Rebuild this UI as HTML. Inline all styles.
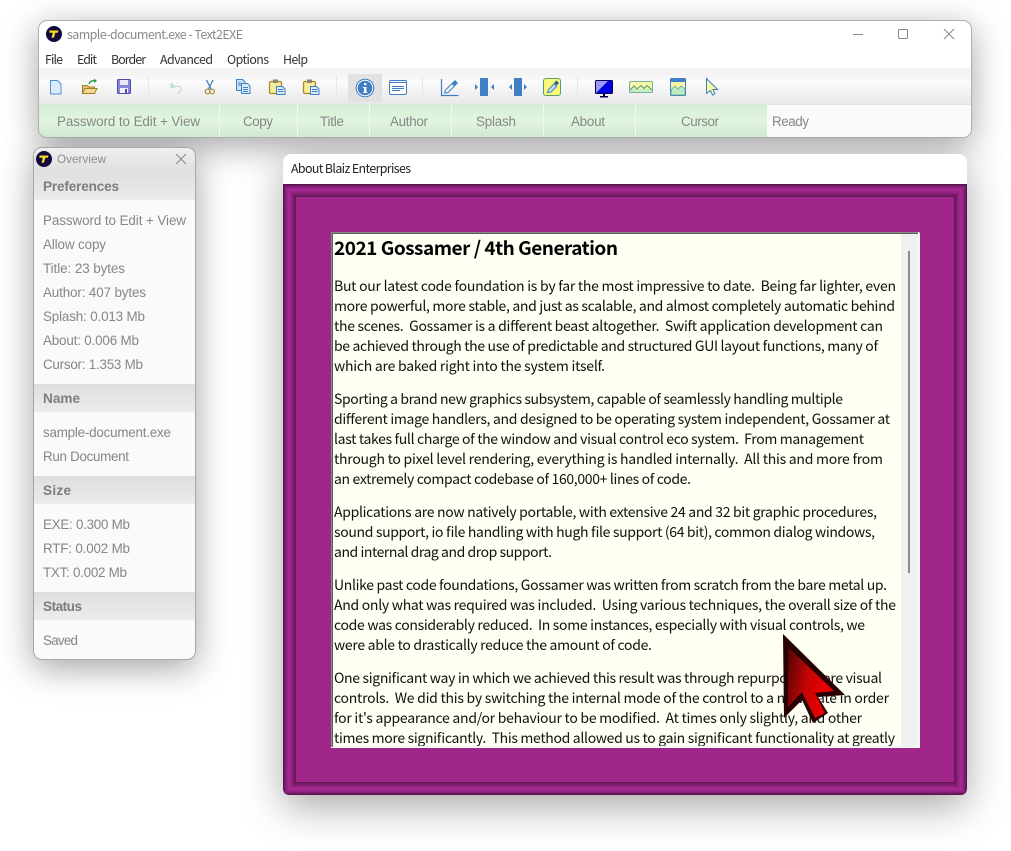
<!DOCTYPE html>
<html><head><meta charset="utf-8"><title>sample-document.exe - Text2EXE</title>
<style>
html,body{margin:0;padding:0;background:#fff;width:1011px;height:851px;overflow:hidden}
.w{position:absolute;box-sizing:border-box}
#main{left:38px;top:20px;width:934px;height:118px;border-radius:9px;background:#fff;border:1px solid #b0b0b0;box-shadow:0 8px 34px rgba(0,0,0,.36)}
#side{left:33px;top:147px;width:163px;height:513px;border-radius:9px;background:#fafafa;border:1px solid #a8a8a8;box-shadow:0 8px 34px rgba(0,0,0,.36)}
#about{left:283px;top:154px;width:684px;height:641px;border-radius:8px;background:#fff;box-shadow:0 12px 40px rgba(0,0,0,.34)}
svg{position:absolute;left:0;top:0}
text{white-space:pre}
.s{font-family:"Liberation Sans",Arial,sans-serif;font-size:13.4px;fill:#868686}
.h{font-family:"Liberation Sans",Arial,sans-serif;font-size:13.6px;font-weight:bold;fill:#7d7d7d}
.u{font-family:"Noto Sans CJK SC","Liberation Sans",sans-serif;font-size:12.4px;fill:#333}
.d{font-family:"Noto Sans CJK SC","Liberation Sans",sans-serif;font-size:14px;fill:#111}
</style></head>
<body>
<div class="w" id="main"></div>
<div class="w" id="side"></div>
<div class="w" id="about"></div>
<svg width="1011" height="851" viewBox="0 0 1011 851" xmlns="http://www.w3.org/2000/svg">
<defs>
<linearGradient id="tb" x1="0" y1="0" x2="0" y2="1"><stop offset="0" stop-color="#f0f0f0"/><stop offset=".4" stop-color="#fafafa"/><stop offset="1" stop-color="#e9e9e9"/></linearGradient>
<linearGradient id="tab" x1="0" y1="0" x2="0" y2="1"><stop offset="0" stop-color="#d3ecd3"/><stop offset=".5" stop-color="#e2f6df"/><stop offset="1" stop-color="#cfe6cf"/></linearGradient>
<linearGradient id="sd" x1="0" y1="0" x2="0" y2="1"><stop offset="0" stop-color="#f0f0f0"/><stop offset="1" stop-color="#dfdfdf"/></linearGradient>
<linearGradient id="hd" x1="0" y1="0" x2="0" y2="1"><stop offset="0" stop-color="#dedede"/><stop offset="1" stop-color="#ececec"/></linearGradient>
<linearGradient id="cur" x1="0" y1="0" x2="1" y2=".3"><stop offset="0" stop-color="#4c0606"/><stop offset=".5" stop-color="#c40404"/><stop offset="1" stop-color="#f00000"/></linearGradient>
<clipPath id="mainclip"><rect x="39" y="21" width="932" height="116" rx="8"/></clipPath>
<clipPath id="sideclip"><rect x="34" y="148" width="161" height="511" rx="8"/></clipPath>
<clipPath id="doc"><rect x="333" y="234" width="568" height="512"/></clipPath>
</defs>

<!-- main window -->
<g clip-path="url(#mainclip)">
<rect x="38" y="68" width="934" height="36" fill="url(#tb)"/>
<rect x="38" y="104" width="934" height="34" fill="#fafafa"/>
<rect x="38" y="104" width="729" height="34" fill="url(#tab)"/>
<rect x="767" y="104" width="205" height="1" fill="#e4e4e4"/>
<g fill="#f4f8f4"><rect x="219" y="104" width="1" height="34"/><rect x="297" y="104" width="1" height="34"/><rect x="369" y="104" width="1" height="34"/><rect x="451" y="104" width="1" height="34"/><rect x="543" y="104" width="1" height="34"/><rect x="635" y="104" width="1" height="34"/></g>
</g>
<circle cx="54" cy="34" r="8" fill="#12083c"/><path d="M49.500 30.500h9l-.7 2.300h-2.500l-1.300 5h-2.500l1.300-5h-3.500z" fill="#f4dc22"/>
<text class="u" x="67" y="39" textLength="176" style="fill:#8a8a8a">sample-document.exe - Text2EXE</text>
<text class="u" x="45" y="64" textLength="18">File</text>
<text class="u" x="77" y="64" textLength="20">Edit</text>
<text class="u" x="111" y="64" textLength="35">Border</text>
<text class="u" x="160" y="64" textLength="53">Advanced</text>
<text class="u" x="227" y="64" textLength="42">Options</text>
<text class="u" x="283" y="64" textLength="25">Help</text>
<!-- window controls -->
<path d="M853 34.500h10" stroke="#8a8a8a" fill="none"/>
<rect x="898.500" y="29.500" width="9" height="9" rx="1" stroke="#8a8a8a" fill="none"/>
<path d="M944 29l10 10M954 29l-10 10" stroke="#8a8a8a" fill="none"/>
<!-- tab labels -->
<text class="s" x="57" y="126" textLength="143">Password to Edit + View</text>
<text class="s" x="243" y="126" textLength="30">Copy</text>
<text class="s" x="320" y="126" textLength="24">Title</text>
<text class="s" x="390" y="126" textLength="38">Author</text>
<text class="s" x="476" y="126" textLength="40">Splash</text>
<text class="s" x="571" y="126" textLength="34">About</text>
<text class="s" x="681" y="126" textLength="38">Cursor</text>
<text class="s" x="772" y="126" textLength="37">Ready</text>
<!-- toolbar separators -->
<g fill="#e6e6e6"><rect x="148" y="76" width="1" height="22"/><rect x="336" y="76" width="1" height="22"/><rect x="422" y="76" width="1" height="22"/><rect x="577" y="76" width="1" height="22"/></g>
<rect x="348" y="74" width="34" height="28" fill="#e2e2e2"/>
<!-- new -->
<path d="M50.500 80.500h7l3.500 3.500v10h-10.500z" fill="#dcebfb" stroke="#4f8fd0"/>
<!-- open -->
<path d="M82.500 93.500v-8h5l1 1.500h6v6.500z" fill="#e8c46c" stroke="#a08030"/><path d="M82.500 93.500l2.500-5h12l-2.500 5z" fill="#f3d98f" stroke="#a08030"/><path d="M89 84c1-3 4-4 6-3" stroke="#2e9a4a" stroke-width="1.500" fill="none"/><path d="M94 78.500l3 2.500-3 2z" fill="#2e9a4a"/>
<!-- save -->
<rect x="117.500" y="79.500" width="13" height="14" rx="1" fill="#8585dc" stroke="#4d4da8"/><rect x="120" y="80" width="8" height="5" fill="#e8e8fa"/><rect x="120" y="88" width="8" height="5" fill="#f2f2fb"/><rect x="125" y="89" width="2" height="4" fill="#5050a8"/>
<!-- undo -->
<path d="M172 86.500h5c5-1 6 6 0 6.500" stroke="#c4dcc8" stroke-width="1.200" fill="none"/><path d="M170 88.500l1-6 5 4.500z" fill="#bfe0c4"/>
<!-- scissors -->
<path d="M206.500 80l4.500 9M213 80l-4.500 9" stroke="#3a78b8" stroke-width="1.200" fill="none"/><circle cx="207.500" cy="91.500" r="2.300" fill="none" stroke="#a8842c" stroke-width="1.200"/><circle cx="212" cy="91.500" r="2.300" fill="none" stroke="#a8842c" stroke-width="1.200"/>
<!-- copy -->
<path d="M236.500 79.500h6l2.500 2.500v8.500h-8.500z" fill="#cfe3f8" stroke="#3f80c4"/><path d="M241.500 83.500h6l2.500 2.500v7.500h-8.500z" fill="#dcebfb" stroke="#3f80c4"/><path d="M243 87.500h5M243 89.500h5M243 91.500h5M238 83h3M238 85h3" stroke="#3f80c4" fill="none"/>
<!-- paste x2 -->
<g id="p"><rect x="269.500" y="81.500" width="12" height="12" rx="1.500" fill="#f8ec9a" stroke="#a88a28" stroke-width="1.300"/><rect x="273" y="79.500" width="5" height="3.500" fill="#8a8a70"/><path d="M276.500 86.500h6l2.500 2.500v5.500h-8.500z" fill="#dcebfb" stroke="#3f80c4"/><path d="M278 89.500h5.500M278 91.500h5.500" stroke="#3f80c4"/></g>
<g transform="translate(34 0)"><rect x="269.500" y="81.500" width="12" height="12" rx="1.500" fill="#f8ec9a" stroke="#a88a28" stroke-width="1.300"/><rect x="273" y="79.500" width="5" height="3.500" fill="#8a8a70"/><path d="M276.500 86.500h6l2.500 2.500v5.500h-8.500z" fill="#dcebfb" stroke="#3f80c4"/><path d="M278 89.500h5.500M278 91.500h5.500" stroke="#3f80c4"/></g>
<!-- info -->
<circle cx="365" cy="88" r="8.800" fill="#fff" stroke="#3f80c4"/><circle cx="365" cy="88" r="7.300" fill="#3f80c4"/><rect x="364" y="83" width="2.400" height="2.200" fill="#fff"/><path d="M363 87h3.400v5h1v1h-4.400v-1h1v-4h-1z" fill="#fff"/>
<!-- form -->
<rect x="389.500" y="80.500" width="17" height="14" rx="1.500" fill="#fff" stroke="#3f80c4"/><path d="M390 82.500h16" stroke="#3f80c4"/><path d="M392 86.500h12M392 88.500h12M392 90.500h8" stroke="#3f80c4" fill="none"/>
<!-- chart pen -->
<path d="M441.500 79v16.500h17" stroke="#3f80c4" stroke-width="1.200" fill="none"/><path d="M444.500 93l1-3 6.500-6.500 2.500 2.500-6.500 6.500z" fill="none" stroke="#3f80c4"/><path d="M452 83l3-3 3 3-3 3z" fill="#3f80c4"/>
<!-- splits -->
<rect x="480" y="78" width="8" height="18" fill="#3f80c4"/><path d="M475 84v6l3-3zM494 84v6l-3-3z" fill="#3f80c4"/>
<rect x="514" y="78" width="8" height="18" fill="#3f80c4"/><path d="M512 84v6l-3-3zM524 84v6l3-3z" fill="#3f80c4"/>
<!-- note -->
<rect x="543.500" y="78.500" width="17" height="17" rx="2.500" fill="#fafa78" stroke="#5a9a70"/><path d="M547.500 92.500l1-3 5.500-5.500 2.500 2.500-5.500 5.500z" fill="#cfe3f8" stroke="#3f80c4"/><path d="M554 83l2.500-2.500 2.500 2.500-2.500 2.500z" fill="#2d5f96"/>
<!-- monitor -->
<rect x="595.500" y="80.500" width="17" height="13" rx="1" fill="#0000e0" stroke="#000050"/><path d="M596 93V81h12z" fill="#9a9aff"/><rect x="603" y="94" width="2" height="2" fill="#000050"/><rect x="600" y="96" width="8" height="1.500" fill="#000050"/>
<!-- landscape -->
<rect x="629.500" y="81.500" width="23" height="11" rx="1" fill="#f6f8a8" stroke="#78b0a0"/><rect x="630" y="89" width="22" height="3" fill="#c6ecc0"/><path d="M630 90l4-4 3 3 4-3.500 3 3 3-3 5 4.500" fill="none" stroke="#4e9a70"/>
<!-- image -->
<rect x="670.500" y="78.500" width="15" height="17" rx="1" fill="#f6f8a8" stroke="#3f80c4"/><rect x="671" y="79" width="14" height="3" fill="#3f80c4"/><path d="M671 90l4-4 3 3 3-3 4 3v6h-14z" fill="#bcecc4" stroke="#4e9a90" stroke-width=".7"/>
<!-- cursor small -->
<path d="M706.500 78.500l11 11h-4.500l2 4-2.500 1.500-2-4.500-4 3z" fill="#f8f8a0" stroke="#3f80c4"/>

<!-- side panel -->
<g clip-path="url(#sideclip)">
<rect x="33" y="147" width="163" height="25" fill="url(#sd)"/>
<rect x="33" y="172" width="163" height="28" fill="url(#hd)"/>
<rect x="33" y="384" width="163" height="28" fill="url(#hd)"/>
<rect x="33" y="476" width="163" height="28" fill="url(#hd)"/>
<rect x="33" y="592" width="163" height="28" fill="url(#hd)"/>
</g>
<circle cx="44" cy="159" r="8" fill="#12083c"/><path d="M39.500 155.500h9l-.7 2.300h-2.500l-1.300 5h-2.500l1.300-5h-3.500z" fill="#f4dc22"/>
<text class="s" style="font-size:11.600px;fill:#8c8c8c" x="57" y="163" textLength="49">Overview</text>
<path d="M176 154l10 10M186 154l-10 10" stroke="#858585" fill="none"/>
<text class="h" x="43" y="191" textLength="76">Preferences</text>
<text class="s" x="43" y="225" textLength="143">Password to Edit + View</text>
<text class="s" x="43" y="249" textLength="63">Allow copy</text>
<text class="s" x="43" y="273" textLength="82">Title: 23 bytes</text>
<text class="s" x="43" y="297" textLength="103">Author: 407 bytes</text>
<text class="s" x="43" y="321" textLength="102">Splash: 0.013 Mb</text>
<text class="s" x="43" y="345" textLength="96">About: 0.006 Mb</text>
<text class="s" x="43" y="369" textLength="100">Cursor: 1.353 Mb</text>
<text class="h" x="43" y="403" textLength="37">Name</text>
<text class="s" x="43" y="437" textLength="128">sample-document.exe</text>
<text class="s" x="43" y="461" textLength="86">Run Document</text>
<text class="h" x="43" y="495" textLength="28">Size</text>
<text class="s" x="43" y="529" textLength="87">EXE: 0.300 Mb</text>
<text class="s" x="43" y="553" textLength="87">RTF: 0.002 Mb</text>
<text class="s" x="43" y="577" textLength="84">TXT: 0.002 Mb</text>
<text class="h" x="43" y="611" textLength="39">Status</text>
<text class="s" x="43" y="645" textLength="35">Saved</text>

<!-- about window -->
<text class="u" style="fill:#222" x="291" y="173" textLength="120">About Blaiz Enterprises</text>
<path d="M283 184h684v604q0 7-7 7H290q-7 0-7-7z" fill="#5a1250"/>
<rect x="284" y="185" width="682" height="609" rx="3" fill="#6e1a62"/>
<rect x="285" y="186" width="680" height="607" fill="#801e72"/>
<rect x="286" y="187" width="678" height="605" fill="#8e2280"/>
<rect x="287" y="188" width="676" height="603" fill="#9a258a"/>
<rect x="288" y="189" width="674" height="601" fill="#a2288f"/>
<rect x="289" y="190" width="672" height="599" fill="#a4288f"/>
<rect x="290" y="191" width="670" height="597" fill="#9c2689"/>
<rect x="291" y="192" width="668" height="595" fill="#92237f"/>
<rect x="292" y="193" width="666" height="593" fill="#882176"/>
<rect x="293" y="194" width="664" height="591" fill="#7c1d6c"/>
<rect x="294" y="195" width="662" height="589" fill="#701a62"/>
<rect x="295" y="196" width="660" height="587" fill="#641758"/>
<rect x="296" y="197" width="658" height="585" fill="#a0268a"/>
<rect x="331" y="232" width="589" height="516" fill="#f4f4f4"/>
<path d="M331 232h589v1H332v515h-1z" fill="#8a8a8a"/>
<path d="M332 233h587v1H333v513h-1z" fill="#5a5a5a"/>
<rect x="333" y="234" width="568" height="512" fill="#fffff3"/>
<rect x="901" y="234" width="17" height="512" fill="#f0f0f0"/>
<rect x="908" y="251" width="2" height="322" fill="#8a8a8a"/>
<path d="M919 232v516h-588v-1h587v-515z" fill="#fff"/>
<g clip-path="url(#doc)">
<text class="d" style="font-size:19px;font-weight:bold;fill:#000" x="334" y="255" textLength="284">2021 Gossamer / 4th Generation</text>
<text class="d" x="334" y="291" textLength="562">But our latest code foundation is by far the most impressive to date.  Being far lighter, even</text>
<text class="d" x="334" y="311" textLength="561">more powerful, more stable, and just as scalable, and almost completely automatic behind</text>
<text class="d" x="334" y="331" textLength="549">the scenes.  Gossamer is a different beast altogether.  Swift application development can</text>
<text class="d" x="334" y="351" textLength="544">be achieved through the use of predictable and structured GUI layout functions, many of</text>
<text class="d" x="334" y="371" textLength="271">which are baked right into the system itself.</text>
<text class="d" x="334" y="404" textLength="509">Sporting a brand new graphics subsystem, capable of seamlessly handling multiple</text>
<text class="d" x="334" y="424" textLength="556">different image handlers, and designed to be operating system independent, Gossamer at</text>
<text class="d" x="334" y="444" textLength="530">last takes full charge of the window and visual control eco system.  From management</text>
<text class="d" x="334" y="464" textLength="549">through to pixel level rendering, everything is handled internally.  All this and more from</text>
<text class="d" x="334" y="484" textLength="357">an extremely compact codebase of 160,000+ lines of code.</text>
<text class="d" x="334" y="517" textLength="543">Applications are now natively portable, with extensive 24 and 32 bit graphic procedures,</text>
<text class="d" x="334" y="537" textLength="541">sound support, io file handling with hugh file support (64 bit), common dialog windows,</text>
<text class="d" x="334" y="557" textLength="218">and internal drag and drop support.</text>
<text class="d" x="334" y="590" textLength="553">Unlike past code foundations, Gossamer was written from scratch from the bare metal up.</text>
<text class="d" x="334" y="610" textLength="562">And only what was required was included.  Using various techniques, the overall size of the</text>
<text class="d" x="334" y="630" textLength="531">code was considerably reduced.  In some instances, especially with visual controls, we</text>
<text class="d" x="334" y="650" textLength="318">were able to drastically reduce the amount of code.</text>
<text class="d" x="334" y="683" textLength="548">One significant way in which we achieved this result was through repurposing core visual</text>
<text class="d" x="334" y="703" textLength="555">controls.  We did this by switching the internal mode of the control to a new state in order</text>
<text class="d" x="334" y="723" textLength="528">for it's appearance and/or behaviour to be modified.  At times only slightly, and other</text>
<text class="d" x="334" y="743" textLength="561">times more significantly.  This method allowed us to gain significant functionality at greatly</text>
</g>
<!-- big cursor -->
<path d="M783 634L845 695L818 697L828 713L813 723L802 700L784 718Z" fill="#260202"/>
<path d="M788 647L834 691L815 693L825 713L815 718L802 692L788 707Z" fill="url(#cur)"/>
</svg>
</body></html>
